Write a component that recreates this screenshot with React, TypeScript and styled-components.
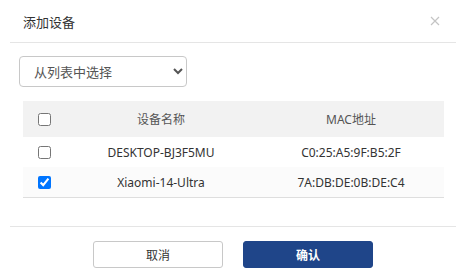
import React, { useState } from "react";
import styled, { createGlobalStyle } from "styled-components";

const GlobalStyle = createGlobalStyle`
  html, body {
    margin: 0;
    padding: 0;
    background: #fff;
  }
  body {
    font-family: "Noto Sans", "Noto Sans CJK SC", sans-serif;
    color: #333;
  }
`;

const Dialog = styled.div`
  width: 466px;
  height: 280px;
  background: #fff;
  display: flex;
  flex-direction: column;
`;

const Header = styled.div`
  height: 42px;
  margin: 0 10px;
  padding: 0 13px;
  display: flex;
  align-items: center;
  justify-content: space-between;
  border-bottom: 1px solid #e5e5e5;
`;

const Title = styled.div`
  font-size: 13px;
  color: #333;
  padding-top: 1px;
`;

const CloseBtn = styled.button`
  border: none;
  background: none;
  padding: 0;
  width: 10px;
  height: 10px;
  margin-right: 3px;
  display: flex;
  cursor: pointer;
`;

const Body = styled.div`
  padding: 13px 19px 0;
  height: 170px;
`;

const Select = styled.select`
  width: 168px;
  height: 31px;
  border: 1px solid #c8c8c8;
  border-radius: 4px;
  padding: 0 8px 0 10px;
  font-size: 13px;
  color: #555;
  font-family: "Noto Sans", "Noto Sans CJK SC", sans-serif;
  background: #fff;
  outline: none;
`;

const Table = styled.div`
  margin: 14px 0 0 4px;
  width: 421px;
  border-bottom: 1px solid #dedede;
`;

const Row = styled.div<{ $head?: boolean; $alt?: boolean }>`
  display: grid;
  grid-template-columns: 41px 194px 1fr;
  align-items: center;
  height: ${(p) => (p.$head ? 36 : 30)}px;
  background: ${(p) => (p.$head ? "#f2f2f2" : p.$alt ? "#fbfbfb" : "#fff")};
  font-size: 12px;
  color: ${(p) => (p.$head ? "#555" : "#333")};
`;

const CheckCell = styled.div`
  padding-left: 15px;
  display: flex;
  align-items: center;
`;

const Check = styled.input`
  margin: 0;
  width: 13px;
  height: 13px;
`;

const Cell = styled.div`
  text-align: center;
  white-space: nowrap;
`;

const Footer = styled.div`
  margin: 0 10px;
  border-top: 1px solid #e5e5e5;
  padding-top: 14px;
  display: flex;
  justify-content: center;
  gap: 20px;
`;

const Button = styled.button<{ $primary?: boolean }>`
  width: 130px;
  height: 27px;
  border-radius: 3px;
  font-size: 12px;
  font-family: "Noto Sans", "Noto Sans CJK SC", sans-serif;
  cursor: pointer;
  border: 1px solid ${(p) => (p.$primary ? "#1f4589" : "#c8c8c8")};
  background: ${(p) => (p.$primary ? "#1f4589" : "#fff")};
  color: ${(p) => (p.$primary ? "#fff" : "#333")};
  font-weight: ${(p) => (p.$primary ? 600 : 400)};
`;

const devices = [
  { name: "DESKTOP-BJ3F5MU", mac: "C0:25:A5:9F:B5:2F" },
  { name: "Xiaomi-14-Ultra", mac: "7A:DB:DE:0B:DE:C4" },
];

export default function App() {
  const [checked, setChecked] = useState([false, true]);

  return (
    <Dialog>
      <GlobalStyle />
      <Header>
        <Title>添加设备</Title>
        <CloseBtn>
          <svg width="10" height="10" viewBox="0 0 10 10">
            <path d="M1 1L9 9M9 1L1 9" stroke="#c4c4c4" strokeWidth="1.2" />
          </svg>
        </CloseBtn>
      </Header>
      <Body>
        <Select defaultValue="list">
          <option value="list">从列表中选择</option>
          <option value="manual">手动输入</option>
        </Select>
        <Table>
          <Row $head>
            <CheckCell>
              <Check type="checkbox" checked={checked.every(Boolean)} onChange={() => {}} />
            </CheckCell>
            <Cell>设备名称</Cell>
            <Cell>MAC地址</Cell>
          </Row>
          {devices.map((d, i) => (
            <Row key={d.mac} $alt={i % 2 === 1}>
              <CheckCell>
                <Check
                  type="checkbox"
                  checked={checked[i]}
                  onChange={() => setChecked(checked.map((c, j) => (j === i ? !c : c)))}
                />
              </CheckCell>
              <Cell>{d.name}</Cell>
              <Cell>{d.mac}</Cell>
            </Row>
          ))}
        </Table>
      </Body>
      <Footer>
        <Button>取消</Button>
        <Button $primary>确认</Button>
      </Footer>
    </Dialog>
  );
}
